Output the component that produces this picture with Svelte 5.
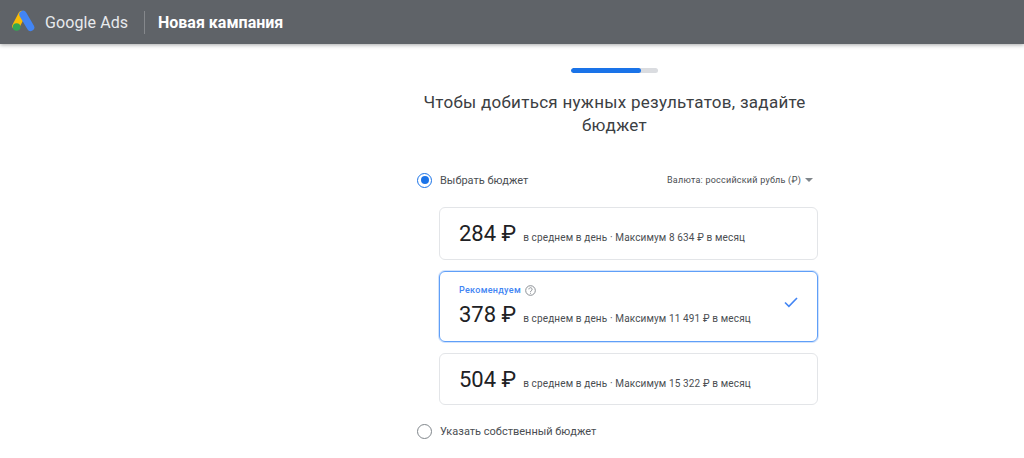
<script>
  const options = [
    { amount: "284", monthly: "8 634", selected: false },
    { amount: "378", monthly: "11 491", selected: true },
    { amount: "504", monthly: "15 322", selected: false },
  ];
</script>

<header class="topbar">
  <svg class="logo" width="24" height="22" viewBox="0 0 24 22">
    <path d="M10 4.5 L4 16" stroke="#fbbc04" stroke-width="7.4" stroke-linecap="round" />
    <path d="M11 4.5 L18.6 17.4" stroke="#4285f4" stroke-width="7.4" stroke-linecap="round" />
    <circle cx="4.6" cy="17" r="3.8" fill="#34a853" />
  </svg>
  <span class="brand">Google Ads</span>
  <span class="divider"></span>
  <span class="title">Новая кампания</span>
</header>

<main class="page">
  <div class="column">
    <div class="intro">
      <div class="progress"><div class="progress-fill"></div></div>
      <h1>Чтобы добиться нужных результатов, задайте бюджет</h1>
    </div>

    <div class="budget-head">
      <label class="radio-row">
        <span class="radio checked"><span class="dot"></span></span>
        <span>Выбрать бюджет</span>
      </label>
      <div class="currency">
        Валюта: российский рубль (₽)
        <span class="caret"></span>
      </div>
    </div>

    <div class="cards">
      {#each options as opt}
        <div class="card" class:selected={opt.selected}>
          <div class="card-body">
            {#if opt.selected}
              <div class="rec">
                Рекомендуем
                <svg width="11" height="11" viewBox="0 0 24 24" fill="none" stroke="#80868b" stroke-width="2">
                  <circle cx="12" cy="12" r="10.5" />
                  <path d="M8.5 9.5a3.5 3.5 0 1 1 5.5 2.8c-1.3.9-2 1.5-2 3" />
                  <path d="M12 17v2" />
                </svg>
              </div>
            {/if}
            <div class="price-row">
              <span class="amount">{opt.amount} ₽</span>
              <span class="note">в среднем в день · Максимум {opt.monthly} ₽ в месяц</span>
            </div>
          </div>
          {#if opt.selected}
            <svg class="check" width="14" height="11" viewBox="0 0 14 11" fill="none" stroke="#4285f4" stroke-width="1.6">
              <path d="M1 5.5 L4.9 9.4 L13 1" />
            </svg>
          {/if}
        </div>
      {/each}
    </div>

    <label class="radio-row own">
      <span class="radio"></span>
      <span>Указать собственный бюджет</span>
    </label>
  </div>
</main>

<style>
  :global(body) {
    margin: 0;
    background: #fff;
    font-family: Roboto, "Liberation Sans", sans-serif;
    overflow: hidden;
  }
  .topbar {
    height: 44px;
    background: #5f6368;
    box-shadow: 0 1px 4px rgba(60, 64, 67, 0.45);
    display: flex;
    align-items: center;
    padding-left: 12px;
    box-sizing: border-box;
  }
  .logo {
    margin: 0 9px 2px 0;
  }
  .brand {
    color: #e8eaed;
    font-size: 16px;
    letter-spacing: 0.1px;
    width: 84px;
  }
  .divider {
    width: 1px;
    height: 23px;
    background: #85888c;
    margin: 0 13px 0 15px;
  }
  .title {
    color: #fff;
    font-size: 16px;
    font-weight: 700;
  }
  .page {
    padding-left: 417px;
  }
  .column {
    width: 401px;
    display: flex;
    flex-direction: column;
  }
  .intro {
    width: 395px;
  }
  .progress {
    width: 87px;
    height: 5px;
    margin: 24px auto 0;
    background: #dadce0;
    border-radius: 3px;
    overflow: hidden;
  }
  .progress-fill {
    width: 70px;
    height: 100%;
    background: #1a73e8;
    border-radius: 3px;
  }
  h1 {
    margin: 18px 0 0;
    text-align: center;
    font-size: 17px;
    line-height: 23px;
    font-weight: 400;
    letter-spacing: 0.28px;
    color: #3c4043;
  }
  .budget-head {
    display: flex;
    justify-content: space-between;
    align-items: center;
    margin-top: 33px;
    height: 20px;
  }
  .radio-row {
    display: flex;
    align-items: center;
    gap: 8px;
    font-size: 11px;
    color: #4a4e52;
  }
  .radio {
    width: 15px;
    height: 15px;
    border-radius: 50%;
    border: 1px solid #80868b;
    box-sizing: border-box;
    display: flex;
    align-items: center;
    justify-content: center;
  }
  .radio.checked {
    border: 1.5px solid #1a73e8;
  }
  .dot {
    width: 8px;
    height: 8px;
    border-radius: 50%;
    background: #1a73e8;
  }
  .currency {
    display: flex;
    align-items: center;
    gap: 4px;
    font-size: 9px;
    letter-spacing: 0.23px;
    color: #4a4e52;
    padding-right: 5px;
  }
  .caret {
    width: 0;
    height: 0;
    border-left: 4px solid transparent;
    border-right: 4px solid transparent;
    border-top: 4px solid #80868b;
  }
  .cards {
    margin: 17px 0 0 22px;
    display: flex;
    flex-direction: column;
    gap: 11px;
  }
  .card {
    border: 1px solid #e3e5e8;
    border-radius: 6px;
    height: 53px;
    box-sizing: border-box;
    padding: 0 19px;
    display: flex;
    align-items: center;
    justify-content: space-between;
  }
  .card:last-child {
    height: 52px;
  }
  .card.selected {
    border-color: #5f9ff8;
    box-shadow: 0 0 0 1px #d2e3fc;
    height: 71px;
    padding-bottom: 2px;
  }
  .rec {
    font-size: 9px;
    font-weight: 500;
    letter-spacing: 0.3px;
    color: #4285f4;
    display: flex;
    align-items: center;
    gap: 4px;
    margin-bottom: 6px;
  }
  .price-row {
    display: flex;
    align-items: baseline;
    gap: 7px;
  }
  .amount {
    font-size: 22px;
    color: #202124;
  }
  .note {
    font-size: 10px;
    letter-spacing: 0.13px;
    color: #4a4e52;
  }
  .check {
    margin-bottom: 6px;
  }
  .own {
    margin-top: 19px;
  }
</style>
